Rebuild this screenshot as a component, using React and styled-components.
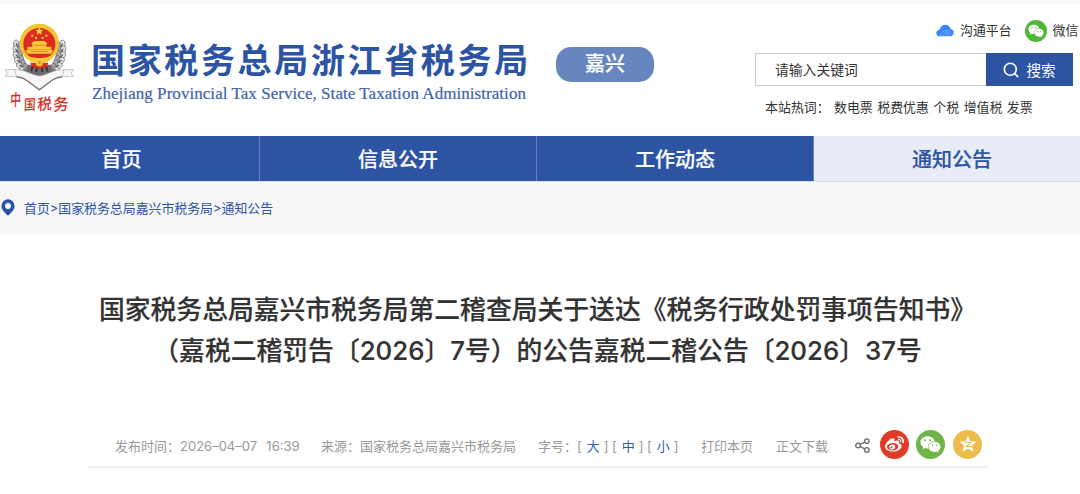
import styled, { createGlobalStyle } from "styled-components";
import { FaWeibo, FaWeixin } from "react-icons/fa";

const BLUE = "#2c54a3";

const NAV_ITEMS = [
    { label: "首页", width: 260 },
    { label: "信息公开", width: 277 },
    { label: "工作动态", width: 277 },
    { label: "通知公告", width: 277, active: true },
];

const HOT_WORDS = ["数电票", "税费优惠", "个税", "增值税", "发票"];

const Leaves = () => {
    const leaves = [];
    for (let i = 0; i < 10; i++) {
        const a = (192 - i * 12) * Math.PI / 180;
        leaves.push([118 + 66 * Math.cos(a), 120 + 77 * Math.sin(a), i * -12]);
    }
    return leaves.map(([x, y, r], i) => (
        <g key={i} stroke="#686868" strokeWidth="2">
            <ellipse cx={x - 3} cy={y} rx="9" ry="15" fill="#e2e2e2" transform={`rotate(${-18 + r} ${x} ${y})`} />
            <ellipse cx={x + 7} cy={y - 2} rx="7" ry="13" fill="#a5a5a5" transform={`rotate(${28 + r} ${x} ${y})`} />
            <path d={`M${x - 3} ${y - 6}v12`} stroke="#444" strokeWidth="3" transform={`rotate(${-18 + r} ${x} ${y})`} />
        </g>
    ));
};

const Emblem = () => (
    <svg width="75" height="105" viewBox="0 0 225 315">
        <Leaves />
        <g transform="translate(236 0) scale(-1 1)"><Leaves /></g>
        <path d="M84 164h68l10 36-44 22-44-22z" fill="#6b6b6b" />
        <circle cx="118" cy="100" r="59" fill="#f3c331" />
        <circle cx="118" cy="102" r="48" fill="#dc2a20" />
        <path d="M118 51l3.400 8.200 8.800.7-6.700 5.700 2.100 8.600-7.600-4.700-7.600 4.700 2.100-8.600-6.700-5.700 8.800-.7z" fill="#f8d43c" />
        <g fill="#f5c938">
            <circle cx="97" cy="77" r="3.500" /><circle cx="139" cy="77" r="3.500" />
            <circle cx="108" cy="84" r="3.500" /><circle cx="128" cy="84" r="3.500" />
            <path d="M94 99l10-6h28l10 6-3 4v7h15v9H82v-9h15v-7z" />
            <path d="M77 120h82l-5 11H82z" />
            <path d="M80 138c12 2 20 6 38 6s26-4 38-6l-12 18H92z" />
        </g>
        <path d="M101 106h34M92 124h52" stroke="#e3842a" strokeWidth="3" />
        <path d="M91 158h54l-6 17H97z" fill="#dc2a20" />
        <circle cx="118" cy="158" r="11" fill="#f2c737" />
        <circle cx="118" cy="158" r="4" fill="#dc8f2c" />
        <path d="M97 170l-3 14M110 174l-1 12M126 174l1 12M139 170l3 14" stroke="#2f2f2f" strokeWidth="5" />
        <g fill="#f6f6f6" stroke="#b0b0b0" strokeWidth="2">
            <path d="M46 178c-10 2-19 0-30 1l6 10-6 10c12-2 22 4 34 0z" />
            <path d="M190 178c10 2 19 0 30 1l-6 10 6 10c-12-2-22 4-34 0z" />
            <path d="M44 180c30-3 49 15 74 18 25-3 44-21 74-18l-6 21c-25 0-43 23-68 39-25-16-43-39-68-39z" />
        </g>
        <path d="M50 201c28 0 43 23 68 38 25-15 40-38 68-38" fill="none" stroke="#777" strokeWidth="4" />
        <g fill="#d62e25" fontFamily='"Noto Sans CJK SC", sans-serif' fontWeight="500" fontSize="36">
            <text transform="translate(30 288) rotate(-4) skewX(-6) scale(.92 1.350)">中</text>
            <text transform="translate(71 301) rotate(-4) skewX(-6) scale(.98 1.200)">国</text>
            <text transform="translate(112 301) rotate(-6) skewX(-6) scale(1.220 1.260)">税</text>
            <text transform="translate(160 303) rotate(-6) skewX(-6) scale(1.280 1.360)">务</text>
        </g>
    </svg>
);

const CloudIcon = () => (
    <Icon width="18" height="13" viewBox="0 0 54 39">
        <path d="M12 37C4 37 0 32 1 26c1-6 5-9 10-9C13 7 20 2 28 2c8 0 14 5 16 13 6 1 10 6 9 12-1 7-5 10-10 10z" fill="#3c86f6" />
        <path d="M13 37c1-12 12-20 28-16M21 37c1-8 9-13 20-10M29 37c2-4 7-6 13-5" fill="none" stroke="#8fbcff" strokeWidth="2" />
    </Icon>
);

const SearchIcon = () => (
    <Icon width="16" height="16" viewBox="0 0 16 16" fill="none" stroke="#fff" strokeWidth="1.600">
        <circle cx="7.300" cy="7.200" r="6" />
        <path d="M11.500 11.500l3.700 3.600" />
    </Icon>
);

const PinIcon = () => (
    <Icon width="14" height="17" viewBox="0 0 14 17">
        <path d="M7 .3a6.600 6.600 0 0 1 6.600 6.600c0 4-3.600 6.700-6.600 9.800C4 13.600.4 10.900.4 6.900A6.600 6.600 0 0 1 7 .3z" fill={BLUE} />
        <circle cx="7" cy="7" r="2.900" fill="#fff" />
    </Icon>
);

const ShareIcon = () => (
    <Icon width="15" height="17" viewBox="0 -2 15 17" fill="none" stroke="#666" strokeWidth="1.300">
        <circle cx="3" cy="7.500" r="2.300" />
        <circle cx="11.800" cy="3.100" r="2.300" />
        <circle cx="11.800" cy="11.900" r="2.300" />
        <path d="M5.100 6.500l4.600-2.400M5.100 8.500l4.600 2.400" />
    </Icon>
);

const QzoneIcon = () => (
    <Icon width="18" height="18" viewBox="0 0 24 24">
        <path d="M12 1l3.200 7.400 8 .7-6 5.300 1.800 7.900-7-4.200-7 4.200 1.800-7.900-6-5.300 8-.7z" fill="#fff" />
        <path d="M7.500 10.300c3-.8 6-.8 8.500 0L9.800 15c2.400.5 5 .5 8 .1" fill="none" stroke="#ecbd4d" strokeWidth="1.600" />
    </Icon>
);

const App = () => (
    <>
        <GlobalStyle />
        <Page>
            <Header>
                <Brand>
                    <Emblem />
                    <BrandText>
                        <BrandName>国家税务总局浙江省税务局</BrandName>
                        <BrandSub>Zhejiang Provincial Tax Service, State Taxation Administration</BrandSub>
                    </BrandText>
                    <City>嘉兴</City>
                </Brand>
                <Tools>
                    <Links>
                        <CloudIcon />
                        <LinkText>沟通平台</LinkText>
                        <Round $size={22} $color="#4fb836"><FaWeixin size={16} /></Round>
                        <LinkText>微信</LinkText>
                    </Links>
                    <SearchBar>
                        <SearchInput>请输入关键词</SearchInput>
                        <SearchButton><SearchIcon />搜索</SearchButton>
                    </SearchBar>
                    <HotWords>
                        <HotLabel>本站热词：</HotLabel>
                        {HOT_WORDS.map((word) => <span key={word}>{word}</span>)}
                    </HotWords>
                </Tools>
            </Header>
            <Nav>
                {NAV_ITEMS.map((item) => (
                    <NavItem key={item.label} $width={item.width} $active={item.active}>{item.label}</NavItem>
                ))}
            </Nav>
            <Breadcrumb>
                <PinIcon />
                <span>首页&gt;国家税务总局嘉兴市税务局&gt;通知公告</span>
            </Breadcrumb>
            <Article>
                <Title>
                    <div>国家税务总局嘉兴市税务局第二稽查局关于送达《税务行政处罚事项告知书》</div>
                    <div>（嘉税二稽罚告〔2026〕7号）的公告嘉税二稽公告〔2026〕37号</div>
                </Title>
                <Meta>
                    <MetaItem $width={206}>发布时间：<Digits>2026–04–07&nbsp; 16:39</Digits></MetaItem>
                    <MetaItem $width={217}>来源：国家税务总局嘉兴市税务局</MetaItem>
                    <MetaItem $width={163}>
                        字号：
                        {["大", "中", "小"].map((size) => <Size key={size}>[<b>{size}</b>]</Size>)}
                    </MetaItem>
                    <MetaItem $width={75}>打印本页</MetaItem>
                    <MetaItem $width={79}>正文下载</MetaItem>
                    <Share>
                        <ShareIcon />
                        <Round $size={29} $color="#df3b26" $gap={10}><FaWeibo size={19} /></Round>
                        <Round $size={29} $color="#70b44b" $gap={7}><FaWeixin size={21} /></Round>
                        <Round $size={29} $color="#ecbd4d" $gap={8}><QzoneIcon /></Round>
                    </Share>
                </Meta>
            </Article>
        </Page>
    </>
);

const GlobalStyle = createGlobalStyle`
  body {
    margin: 0;
    background: #fff;
    font-family: Inter, "Noto Sans CJK SC", sans-serif;
    overflow: hidden;
  }
`;

const Page = styled.div`
  width: 1080px;
  height: 494px;
  overflow: hidden;
  white-space: nowrap;
`;

const Icon = styled.svg`
  flex: none;
`;

const Header = styled.header`
  display: flex;
  justify-content: space-between;
  box-sizing: border-box;
  height: 136px;
  border-top: 4px solid #f7f7f7;
`;

const Brand = styled.div`
  display: flex;
  align-items: flex-start;
  padding-top: 6px;
`;

const BrandText = styled.div`
  width: 481px;
  box-sizing: border-box;
  padding: 29px 0 0 16px;
`;

const BrandName = styled.div`
  color: ${BLUE};
  font-size: 34px;
  font-weight: 700;
  line-height: 44px;
  letter-spacing: 2.65px;
`;

const BrandSub = styled.div`
  margin: 1px 0 0 1px;
  color: #3f63ab;
  font-family: "Liberation Serif", serif;
  font-size: 17px;
  line-height: 20px;
  letter-spacing: 0.05px;
  -webkit-text-stroke: 0.2px #3f63ab;
`;

const City = styled.div`
  width: 98px;
  height: 35px;
  margin-top: 37px;
  border-radius: 15px;
  background: #6886be;
  color: #fff;
  font-size: 20px;
  font-weight: 500;
  line-height: 35px;
  text-align: center;
  -webkit-text-stroke: 0.2px #fff;
`;

const Tools = styled.div`
  width: 325px;
  padding-top: 15px;
`;

const Links = styled.div`
  display: flex;
  align-items: center;
  height: 23px;
  padding-left: 181px;
`;

const LinkText = styled.span`
  flex: none;
  margin: -2px 13px 0 6px;
  color: #333;
  font-size: 12.9px;
`;

const Round = styled.span`
  display: flex;
  align-items: center;
  justify-content: center;
  flex: none;
  width: ${({ $size }) => $size}px;
  height: ${({ $size }) => $size}px;
  margin-left: ${({ $gap = 0 }) => $gap}px;
  border-radius: 50%;
  background: ${({ $color }) => $color};
  color: #fff;
`;

const SearchBar = styled.div`
  display: flex;
  width: 318px;
  height: 33px;
  margin-top: 11px;
`;

const SearchInput = styled.div`
  flex: 1;
  box-sizing: border-box;
  padding-left: 19px;
  border: 1px solid #c9c9c9;
  border-right: none;
  color: #333;
  font-size: 13.8px;
  line-height: 33px;
`;

const SearchButton = styled.div`
  display: flex;
  align-items: center;
  justify-content: center;
  gap: 7px;
  width: 87px;
  background: ${BLUE};
  color: #fff;
  font-size: 14.6px;
`;

const HotWords = styled.div`
  display: flex;
  gap: 4.4px;
  margin: 11px 0 0 10px;
  color: #333;
  font-size: 12.95px;
  line-height: 20px;
`;

const HotLabel = styled.span`
  width: 64.6px;
`;

const Nav = styled.nav`
  display: flex;
  height: 46px;
  border-bottom: 1px solid #d5ddeb;
  box-sizing: border-box;
`;

const NavItem = styled.div`
  flex: none;
  box-sizing: border-box;
  width: ${({ $width }) => $width}px;
  padding-right: ${({ $width }) => ($width === 260 ? 16 : 0)}px;
  border-right: 1px solid #6685bd;
  background: ${({ $active }) => ($active ? "#e7ecf6" : BLUE)};
  color: ${({ $active }) => ($active ? BLUE : "#fff")};
  font-size: 20px;
  font-weight: 500;
  line-height: 48px;
  text-align: center;
  -webkit-text-stroke: 0.2px;
`;

const Breadcrumb = styled.div`
  display: flex;
  align-items: center;
  gap: 9px;
  box-sizing: border-box;
  height: 52px;
  padding: 0 0 2px 1px;
  background: #f7f7f7;
  color: ${BLUE};
  font-size: 12.9px;
`;

const Article = styled.main`
  padding: 55px 92px 0 87px;
`;

const Title = styled.div`
  color: #333;
  font-size: 25.8px;
  font-weight: 500;
  line-height: 41px;
  text-align: center;
  -webkit-text-stroke: 0.2px #333;
`;

const Meta = styled.div`
  display: flex;
  align-items: center;
  box-sizing: border-box;
  height: 46px;
  margin-top: 51px;
  padding-left: 28px;
  border-bottom: 2px solid #f0f0f0;
  color: #999;
  font-size: 13px;
`;

const MetaItem = styled.div`
  flex: none;
  width: ${({ $width }) => $width}px;
  padding-top: 2px;
`;

const Digits = styled.span`
  word-spacing: 1px;
`;

const Size = styled.span`
  margin-right: 3.5px;

  b {
    margin: 0 4px 0 5px;
    color: #2f5cb5;
    font-weight: 400;
  }
`;

const Share = styled.div`
  display: flex;
  align-items: center;
`;

export default App;
